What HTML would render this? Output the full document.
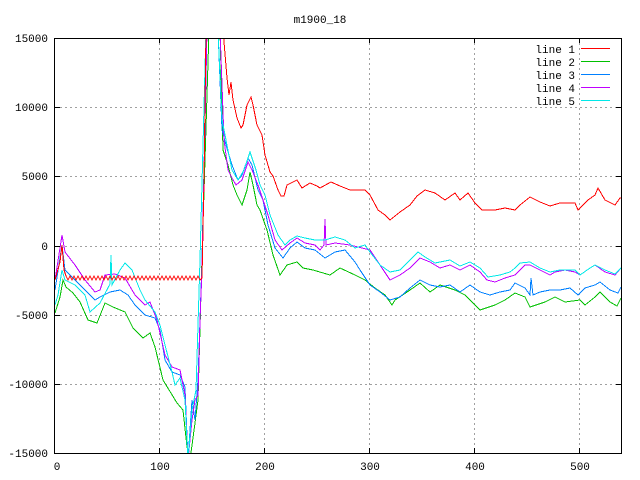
<!DOCTYPE html>
<html><head><style>body{margin:0;background:#fff}svg{display:block}text{font-family:"Liberation Mono","DejaVu Sans Mono",monospace;font-size:11px;fill:#000}</style></head>
<body>
<svg width="640" height="480" viewBox="0 0 640 480" xmlns="http://www.w3.org/2000/svg">
<rect width="640" height="480" fill="#fff"/>
<text x="320" y="23" text-anchor="middle">m1900_18</text>
<g stroke="#a0a0a0" stroke-dasharray="2,3" stroke-width="1" shape-rendering="crispEdges">
<line x1="55" y1="107.5" x2="621" y2="107.5"/><line x1="55" y1="176.5" x2="621" y2="176.5"/><line x1="55" y1="246.5" x2="621" y2="246.5"/><line x1="55" y1="315.5" x2="621" y2="315.5"/><line x1="55" y1="384.5" x2="621" y2="384.5"/>
<line x1="159.5" y1="38" x2="159.5" y2="453"/><line x1="264.5" y1="38" x2="264.5" y2="453"/><line x1="369.5" y1="38" x2="369.5" y2="453"/><line x1="474.5" y1="38" x2="474.5" y2="453"/><line x1="579.5" y1="38" x2="579.5" y2="453"/>
</g>
<g text-anchor="end">
<text x="48" y="42">15000</text><text x="48" y="111">10000</text><text x="48" y="180">5000</text><text x="48" y="250">0</text><text x="48" y="319">-5000</text><text x="48" y="388">-10000</text><text x="48" y="457">-15000</text>
</g>
<g text-anchor="middle">
<text x="57" y="470">0</text><text x="160" y="470">100</text><text x="265" y="470">200</text><text x="370" y="470">300</text><text x="475" y="470">400</text><text x="580" y="470">500</text>
</g>
<defs><clipPath id="c"><rect x="55" y="38" width="566" height="415"/></clipPath></defs>
<g clip-path="url(#c)" fill="none" stroke-width="1" shape-rendering="crispEdges">
<polyline stroke="#00c000" points="55,313 60,297 63,280 66,287 73,293 80,302 88,320 97,323 105,303 113,307 125,312 133,328 143,338 150,333 155,347 163,380 177,403 183,410 187,447 190,460 195,423 198,400 202,257 209,30 220,30 223,150 228,165 233,185 237,195 242,205 247,190 250,172 253,185 257,205 260,210 267,230 273,255 280,275 287,265 297,262 303,268 313,270 330,275 340,268 355,275 365,280 375,288 385,295 392,305 395,300 410,290 420,283 430,292 440,285 455,290 465,295 475,305 480,310 495,305 505,300 515,293 525,297 530,307 545,302 555,297 565,302 580,300 585,305 595,297 600,292 610,302 617,306 621,298"/>
<polyline stroke="#0080ff" points="55,290 62,245 65,270 75,280 85,290 95,300 100,297 110,292 120,290 128,295 135,305 145,315 155,318 160,330 165,360 172,372 180,375 185,387 188,460 192,400 195,420 198,380 202,260 207,30 218,30 222,130 226,145 232,165 238,180 242,175 248,158 252,165 258,190 263,200 268,225 275,248 283,258 290,248 297,242 305,248 315,250 325,258 335,252 345,250 355,262 360,270 370,285 380,292 390,300 400,297 410,288 420,280 430,285 440,287 450,285 460,292 470,285 480,292 490,295 500,292 510,290 515,283 525,288 530,295 531,278 533,295 540,292 550,290 560,290 570,288 578,295 585,288 595,285 600,282 610,290 618,293 621,287"/>
<polyline stroke="#c000ff" points="55,280 62,235 65,252 75,265 85,280 95,292 100,290 105,275 115,274 125,278 135,295 145,305 150,302 157,320 165,355 172,367 180,370 185,395 188,460 192,420 195,400 198,395 200,320 202,270 207,30 220,30 224,140 228,170 232,178 236,185 242,180 248,162 252,170 258,185 263,200 268,215 275,240 282,250 290,243 297,238 305,243 315,245 320,250 324,245 325,219 326,245 335,243 350,245 370,250 380,265 390,280 400,275 410,268 420,258 430,262 440,268 450,265 460,270 470,265 480,272 487,280 495,282 505,278 515,275 525,265 530,265 540,270 550,275 555,272 565,270 575,272 580,275 590,268 595,265 605,272 615,275 621,268"/>
<polyline stroke="#00e8e8" points="55,305 58,295 62,270 65,280 75,285 85,295 90,312 100,303 110,284 111,255 112,285 120,270 125,263 132,270 140,290 145,300 155,312 160,325 165,345 172,372 175,385 180,378 185,400 188,460 192,410 196,390 200,260 206,30 218,30 222,120 226,140 232,170 238,180 244,170 250,152 256,170 260,185 265,195 270,215 278,235 285,245 290,240 297,236 305,238 315,240 325,240 335,237 345,240 355,248 365,245 370,252 380,265 390,272 400,270 410,260 418,252 425,257 435,263 440,262 450,260 460,266 470,262 480,268 488,277 500,275 510,272 515,268 520,263 530,262 540,268 550,272 560,270 575,270 580,275 590,268 595,265 605,270 615,274 621,268"/>
<polyline stroke="#ff0000" points="55,280 60,262 62,245 64,270 66,276 68,280 70,276 72,280 74,276 76,280 78,276 80,280 82,276 84,280 86,276 88,280 90,276 92,280 94,276 96,280 98,276 100,280 102,276 104,280 106,276 108,280 110,276 112,280 114,276 116,280 118,276 120,280 122,276 124,280 126,276 128,280 130,276 132,280 134,276 136,280 138,276 140,280 142,276 144,280 146,276 148,280 150,276 152,280 154,276 156,280 158,276 160,280 162,276 164,280 166,276 168,280 170,276 172,280 174,276 176,280 178,276 180,280 182,276 184,280 186,276 188,280 190,276 192,280 194,276 196,280 198,276 200,280 202,278 204,180 206,30 223,30 227,78 229,95 231,82 233,100 237,118 241,128 243,125 247,105 251,97 253,105 257,125 262,135 265,155 270,172 273,176 278,190 281,196 284,196 287,185 297,180 302,188 310,183 317,186 320,188 331,182 340,186 350,190 365,190 370,195 378,210 385,215 390,220 400,212 410,205 417,196 425,190 435,193 445,200 455,193 460,200 468,193 475,203 482,210 495,210 505,208 515,210 520,205 530,197 540,202 550,206 560,203 575,203 578,210 588,200 595,195 598,188 605,200 615,205 620,198 621,198"/>
</g>
<rect x="54.5" y="38.5" width="567" height="415" fill="none" stroke="#000" stroke-width="1" shape-rendering="crispEdges"/>
<g stroke="#000" shape-rendering="crispEdges">
<line x1="55" y1="107.5" x2="60" y2="107.5"/><line x1="55" y1="176.5" x2="60" y2="176.5"/><line x1="55" y1="246.5" x2="60" y2="246.5"/><line x1="55" y1="315.5" x2="60" y2="315.5"/><line x1="55" y1="384.5" x2="60" y2="384.5"/>
<line x1="616" y1="107.5" x2="621" y2="107.5"/><line x1="616" y1="176.5" x2="621" y2="176.5"/><line x1="616" y1="246.5" x2="621" y2="246.5"/><line x1="616" y1="315.5" x2="621" y2="315.5"/><line x1="616" y1="384.5" x2="621" y2="384.5"/>
<line x1="159.5" y1="38" x2="159.5" y2="43"/><line x1="264.5" y1="38" x2="264.5" y2="43"/><line x1="369.5" y1="38" x2="369.5" y2="43"/><line x1="474.5" y1="38" x2="474.5" y2="43"/><line x1="579.5" y1="38" x2="579.5" y2="43"/>
<line x1="159.5" y1="448" x2="159.5" y2="453"/><line x1="264.5" y1="448" x2="264.5" y2="453"/><line x1="369.5" y1="448" x2="369.5" y2="453"/><line x1="474.5" y1="448" x2="474.5" y2="453"/><line x1="579.5" y1="448" x2="579.5" y2="453"/>
</g>
<g text-anchor="end">
<text x="575" y="53">line 1</text><text x="575" y="66">line 2</text><text x="575" y="79">line 3</text><text x="575" y="92">line 4</text><text x="575" y="105">line 5</text>
</g>
<g shape-rendering="crispEdges">
<line x1="581" y1="48.5" x2="610" y2="48.5" stroke="#ff0000"/>
<line x1="581" y1="61.5" x2="610" y2="61.5" stroke="#00c000"/>
<line x1="581" y1="74.5" x2="610" y2="74.5" stroke="#0080ff"/>
<line x1="581" y1="87.5" x2="610" y2="87.5" stroke="#c000ff"/>
<line x1="581" y1="100.5" x2="610" y2="100.5" stroke="#00e8e8"/>
</g>
</svg>
</body></html>
